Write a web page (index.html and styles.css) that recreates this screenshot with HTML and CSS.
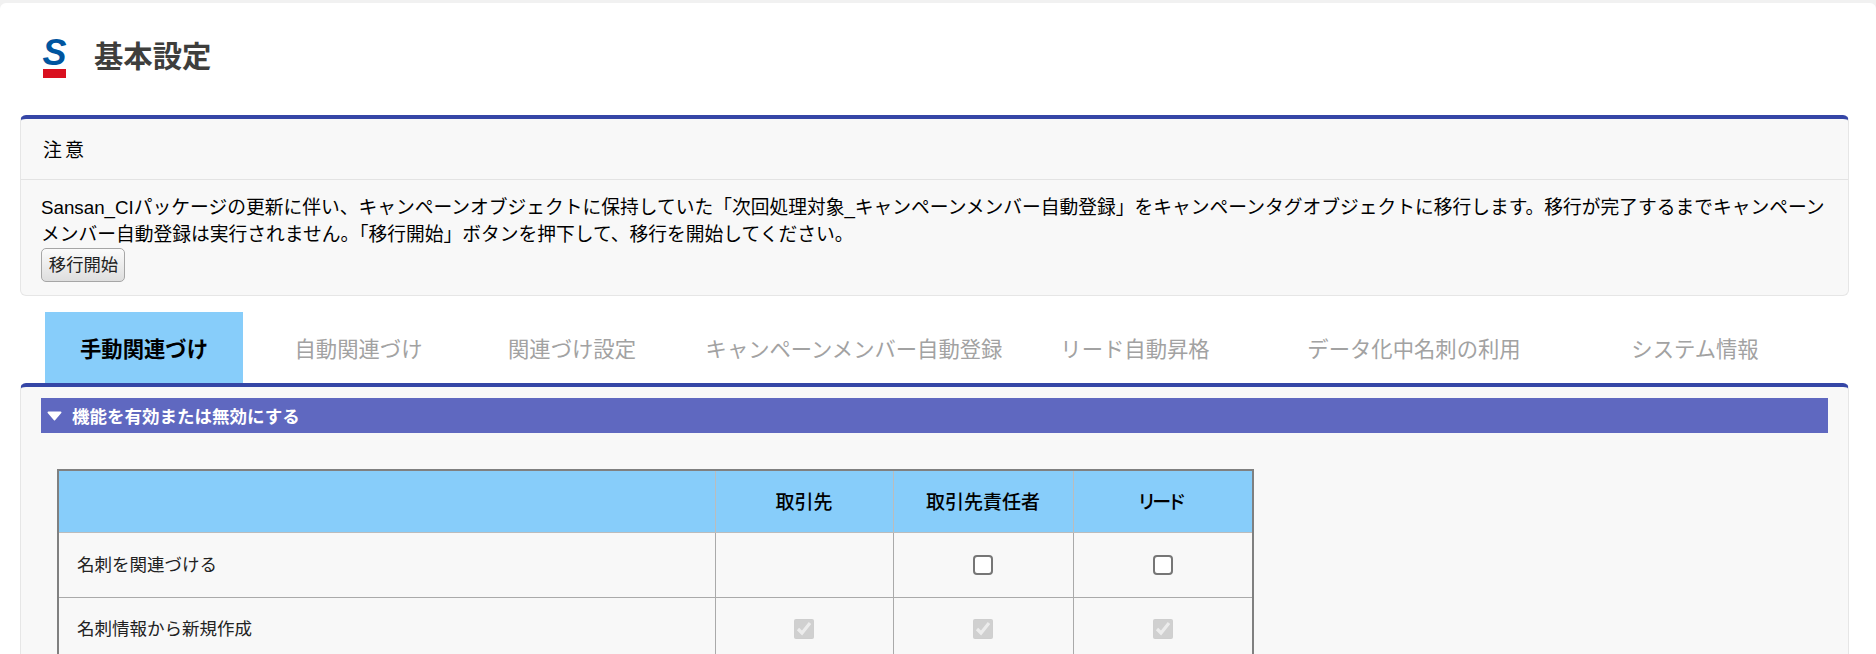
FILE: index.html
```html
<!DOCTYPE html>
<html lang="ja">
<head>
<meta charset="utf-8">
<title>基本設定</title>
<link rel="stylesheet" href="styles.css">
</head>
<body>
<div class="page">
  <header class="page-header">
    <div class="logo"><span class="logo-s">S</span><span class="logo-bar"></span></div>
    <h1 class="page-title">基本設定</h1>
  </header>

  <section class="card">
    <div class="card-head">注意</div>
    <div class="card-body">
      <p class="notice">Sansan_CIパッケージの更新に伴い、キャンペーンオブジェクトに保持していた「次回処理対象_キャンペーンメンバー自動登録」をキャンペーンタグオブジェクトに移行します。移行が完了するまでキャンペーンメンバー自動登録は実行されません。「移行開始」ボタンを押下して、移行を開始してください。</p>
      <button class="btn" type="button">移行開始</button>
    </div>
  </section>

  <nav class="tabs">
    <a class="tab tab-1 active">手動関連づけ</a>
    <a class="tab tab-2">自動関連づけ</a>
    <a class="tab tab-3">関連づけ設定</a>
    <a class="tab tab-4">キャンペーンメンバー自動登録</a>
    <a class="tab tab-5">リード自動昇格</a>
    <a class="tab tab-6">データ化中名刺の利用</a>
    <a class="tab tab-7">システム情報</a>
  </nav>

  <section class="card panel">
    <div class="section-bar">
      <svg class="caret" width="15" height="10" viewBox="0 0 13 9"><path d="M1 0.5h11a0.8 0.8 0 0 1 0.6 1.3L7 8.3a0.7 0.7 0 0 1-1 0L0.4 1.8A0.8 0.8 0 0 1 1 0.5z" fill="#fff"/></svg>
      <span>機能を有効または無効にする</span>
    </div>
    <table class="grid">
      <colgroup><col class="c-label"><col class="c-a"><col class="c-b"><col class="c-c"></colgroup>
      <thead>
        <tr>
          <th></th>
          <th>取引先</th>
          <th>取引先責任者</th>
          <th><span class="narrow">リード</span></th>
        </tr>
      </thead>
      <tbody>
        <tr>
          <td class="label">名刺を関連づける</td>
          <td></td>
          <td><input type="checkbox"></td>
          <td><input type="checkbox"></td>
        </tr>
        <tr>
          <td class="label">名刺情報から新規作成</td>
          <td><input type="checkbox" checked disabled></td>
          <td><input type="checkbox" checked disabled></td>
          <td><input type="checkbox" checked disabled></td>
        </tr>
      </tbody>
    </table>
  </section>
</div>
</body>
</html>
```
FILE: styles.css
```css
* { box-sizing: border-box; }
html, body { margin: 0; height: 654px; overflow: hidden; }
body {
  background: #f1f1f1;
  font-family: "Liberation Sans", "Noto Sans CJK JP", sans-serif;
  color: #000;
}
.page {
  margin-top: 3px;
  height: 651px;
  background: #fff;
  border-radius: 6px 6px 0 0;
  padding: 0 27px 0 20px;
  overflow: hidden;
}
.page-header {
  display: flex;
  align-items: center;
  height: 112px;
  padding: 0 0 4px 23px;
  gap: 28px;
}
.logo {
  width: 23px;
  display: flex;
  flex-direction: column;
  align-items: center;
}
.logo-s {
  font: italic 700 36px/32px "Liberation Sans", sans-serif;
  color: #00559f;
  height: 32px;
}
.logo-bar { width: 23px; height: 9px; background: #d9101f; }
.page-title {
  margin: 0;
  font-size: 29.33px;
  line-height: 40px;
  font-weight: 700;
  color: #3e3e3c;
}
.card {
  background: #f8f8f8;
  border: 1px solid #e6e6e6;
  border-top: 4px solid #3546a6;
  border-radius: 6px;
}
.card-head {
  height: 61px;
  display: flex;
  align-items: center;
  padding: 0 0 2px 22px;
  font-size: 19px;
  letter-spacing: 3px;
  border-bottom: 1px solid #e3e3e3;
}
.card-body { padding: 14px 20px 13px; }
.notice {
  margin: 0;
  font-size: 18.75px;
  line-height: 27px;
  color: #000;
}
.btn {
  display: block;
  width: 84px;
  height: 34px;
  padding: 0 0 3px 1px;
  font-family: inherit;
  font-size: 17.33px;
  color: #222;
  background: linear-gradient(#fbfbfb, #dedede);
  border: 1px solid #a6a6a6;
  border-radius: 5px;
}
.tabs {
  display: flex;
  margin: 16px 0 0 25px;
  height: 71px;
}
.tab {
  display: flex;
  align-items: center;
  justify-content: center;
  font-size: 21.33px;
  color: #a2a2a2;
  white-space: nowrap;
}
.tab-1 { width: 198px; }
.tab-2 { width: 231px; }
.tab-3 { width: 196px; }
.tab-4 { width: 368px; }
.tab-5 { width: 194px; }
.tab-6 { width: 364px; }
.tab-7 { width: 198px; }
.tab.active { background: #87cdfa; color: #000; font-weight: 700; }
.panel {
  padding: 11px 20px 40px;
  border-radius: 6px 6px 0 0;
  height: 300px;
}
.section-bar {
  display: flex;
  align-items: center;
  gap: 10px;
  height: 35px;
  padding-left: 6px;
  background: #5f68c0;
  color: #fff;
  font-size: 17.5px;
  font-weight: 700;
}
.grid {
  margin: 36px 0 0 16px;
  width: 1195px;
  table-layout: fixed;
  border-collapse: collapse;
  border: 2px solid #808080;
}
.c-label { width: 657px; }
.c-a { width: 178px; }
.c-b { width: 180px; }
.c-c { width: 180px; }
th, td {
  border: 1px solid #aaa;
  text-align: center;
  padding: 0;
}
th {
  height: 62px;
  background: #87cdfa;
  font-size: 19px;
  font-weight: 500;
  border-color: #bcbcbc;
  padding-bottom: 2px;
}
td { height: 65px; }
td.label {
  text-align: left;
  padding: 0 0 3px 18px;
  font-size: 17.5px;
  color: #222;
}
.narrow { display: inline-block; letter-spacing: -4px; margin-right: 6px; }
input[type="checkbox"] {
  width: 20px;
  height: 20px;
  margin: 0;
  vertical-align: middle;
}
input[type="checkbox"]:not(:disabled) {
  appearance: none;
  background: #fff;
  border: 2px solid #767676;
  border-radius: 4px;
}
```
